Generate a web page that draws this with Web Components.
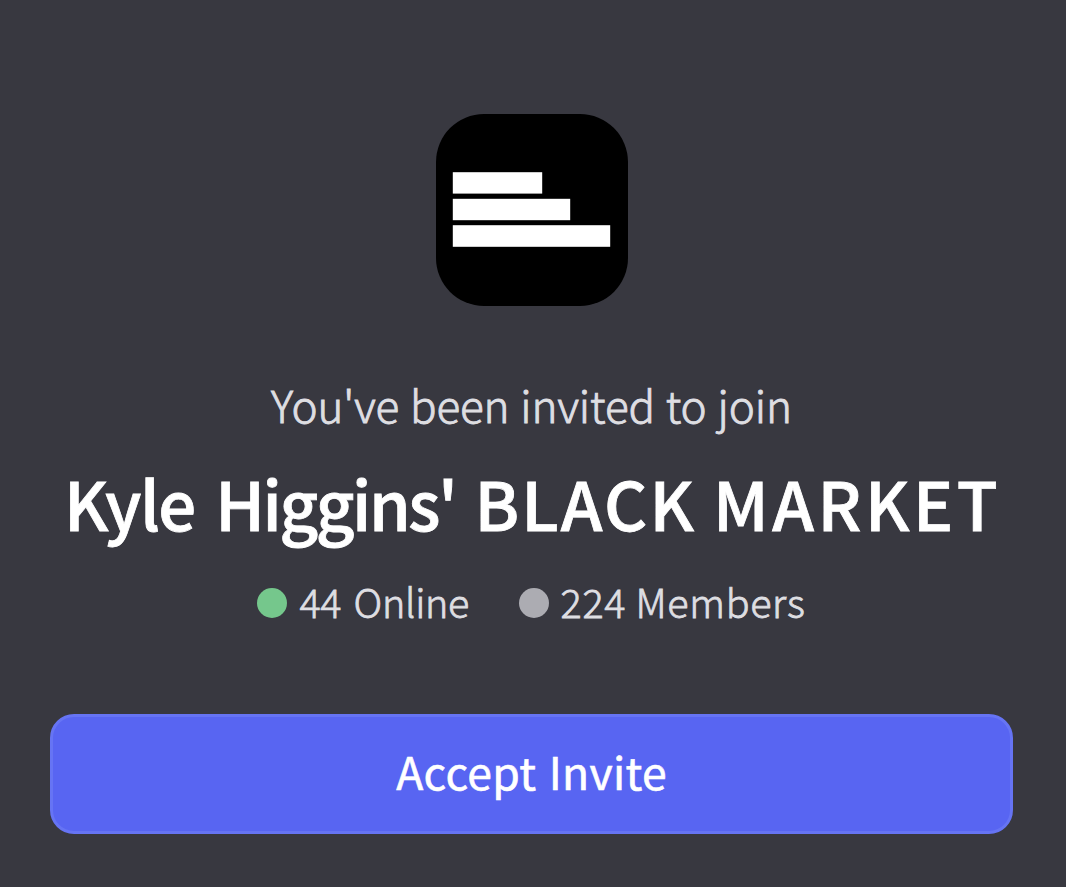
<!DOCTYPE html>
<html lang="en">
<head>
<meta charset="utf-8">
<title>Invite</title>
<style>
    html, body{
        margin: 0;
        height: 100%;
        background: #383840;
        font-family: "Noto Sans CJK JP", "Noto Sans", sans-serif;
    }
    .first{
        letter-spacing: -1.6px;
        margin-right: 5.6px;
    }
    .last{
        letter-spacing: -2.4px;
        margin-right: 3.6px;
    }
    .black{
        letter-spacing: 2.2px;
        margin-right: 1.7px;
    }
    .market{
        letter-spacing: 3.6px;
        margin-right: -2.4px;
    }
</style>
</head>
<body>
<invite-card>
    <server-icon slot="icon"></server-icon>
    <span slot="lead">You've been invited to join</span>
    <span slot="name"><span class="first">Kyle</span> <span class="last">Higgins'</span> <span class="black">BLACK</span> <span class="market">MARKET</span></span>
    <member-count slot="counts" style="--dot: #75c78c; --spacing: -0.3px; --word: 4px">44 Online</member-count>
    <member-count slot="counts" style="--dot: #acacb2; --spacing: 0.7px; --word: 0px">224 Members</member-count>
    <accept-button slot="action">Accept Invite</accept-button>
</invite-card>
<script>
customElements.define("server-icon", class ServerIcon extends HTMLElement{
    constructor(){
        super()
        this.attachShadow({mode: "open"}).innerHTML = `
            <style>
            :host{
                display: block;
                width: 192px;
                height: 192px;
                border-radius: 48px;
                overflow: hidden;
                background: #000;
            }
            svg{
                display: block;
            }
            </style>
            <svg width="192" height="192" viewBox="0 0 192 192" fill="#fff">
                <rect x="16.8" y="58.2" width="89.4" height="21.4"/>
                <rect x="16.8" y="84.8" width="117.4" height="21.4"/>
                <rect x="16.8" y="111.2" width="157.4" height="21.6"/>
            </svg>
            `
    }
})

customElements.define("member-count", class MemberCount extends HTMLElement{
    constructor(){
        super()
        this.attachShadow({mode: "open"}).innerHTML = `
            <style>
            :host{
                display: flex;
                align-items: center;
                font-size: 39.5px;
                font-weight: 300;
                line-height: 54px;
                letter-spacing: var(--spacing);
                word-spacing: var(--word);
                white-space: nowrap;
                -webkit-text-stroke: 0.8px currentColor;
            }
            .dot{
                width: 30px;
                height: 30px;
                margin-right: 12px;
                border-radius: 50%;
                background: var(--dot);
            }
            .label{
                padding-bottom: 4px;
            }
            </style>
            <span class="dot"></span>
            <span class="label"><slot></slot></span>
            `
    }
})

customElements.define("accept-button", class AcceptButton extends HTMLElement{
    constructor(){
        super()
        this.attachShadow({mode: "open"}).innerHTML = `
            <style>
            :host{
                display: block;
            }
            button{
                display: block;
                box-sizing: border-box;
                width: 100%;
                height: 120px;
                padding: 0 0 7px;
                border: 3px solid #6674f4;
                border-radius: 24px;
                background: #5865f2;
                color: #fff;
                font: 400 44.5px/107px "Noto Sans CJK JP", "Noto Sans", sans-serif;
                letter-spacing: 0.3px;
                word-spacing: 2px;
                -webkit-text-stroke: 0.6px currentColor;
            }
            </style>
            <button type="button"><slot></slot></button>
            `
    }
})

customElements.define("invite-card", class InviteCard extends HTMLElement{
    constructor(){
        super()
        this.attachShadow({mode: "open"}).innerHTML = `
            <style>
            :host{
                display: flex;
                flex-direction: column;
                align-items: center;
                box-sizing: border-box;
                height: 887px;
                padding: 114px 53px 0 50px;
                color: #dedee2;
                white-space: nowrap;
            }
            .lead{
                margin-top: 68px;
                font-size: 44px;
                font-weight: 300;
                line-height: 60px;
                letter-spacing: -0.1px;
                word-spacing: 1.2px;
                -webkit-text-stroke: 0.9px currentColor;
            }
            h1{
                margin: 23px 0 0;
                color: #fff;
                font-size: 67px;
                font-weight: 500;
                line-height: 90px;
                -webkit-text-stroke: 0.8px currentColor;
            }
            .counts{
                display: flex;
                gap: 49.5px;
                margin-top: 27px;
            }
            .action{
                align-self: stretch;
                margin-top: 82px;
            }
            </style>
            <slot name="icon"></slot>
            <div class="lead"><slot name="lead"></slot></div>
            <h1><slot name="name"></slot></h1>
            <div class="counts"><slot name="counts"></slot></div>
            <div class="action"><slot name="action"></slot></div>
            `
    }
})
</script>
</body>
</html>
